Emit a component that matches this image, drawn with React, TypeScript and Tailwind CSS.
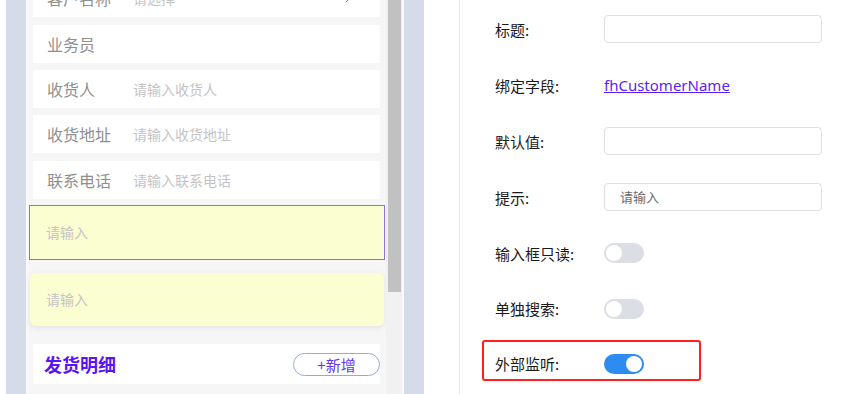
import React from "react";
import { ChevronRight } from "lucide-react";

const cjk = { fontFamily: '"Noto Sans CJK SC", "Noto Sans", sans-serif' };

function Row({ label, placeholder, mt, chevron }: { label: string; placeholder?: string; mt: string; chevron?: boolean }) {
  return (
    <div className={`${mt} h-[38px] w-[347px] bg-white flex items-center pl-[14px] pr-[24px]`}>
      <div className="w-[86px] text-[16px] text-[#8f8f8f] leading-none">{label}</div>
      <div className="flex-1 text-[14px] text-[#c4c4c4] leading-none">{placeholder}</div>
      {chevron && <ChevronRight size={16} strokeWidth={1.5} className="text-[#8a8a8a]" />}
    </div>
  );
}

function FormRow({ label, h, children }: { label: string; h: string; children: React.ReactNode }) {
  return (
    <div className={`${h} flex items-center`}>
      <div className="w-[109px] text-[15px] text-[#1a1a1a] leading-none">{label}</div>
      {children}
    </div>
  );
}

function Input({ placeholder }: { placeholder?: string }) {
  return (
    <div className="w-[218px] h-[28px] border border-[#dcdfe6] rounded-[4px] flex items-center pl-[15px] text-[13px] text-[#6b6b6b]">
      {placeholder}
    </div>
  );
}

function Toggle({ on }: { on?: boolean }) {
  return (
    <div className={`w-[40px] h-[20px] rounded-full flex items-center px-[2px] ${on ? "bg-[#2d8cf0] justify-end" : "bg-[#dcdee6] justify-start"}`}>
      <div className="w-[16px] h-[16px] rounded-full bg-white" />
    </div>
  );
}

export default function App() {
  return (
    <div className="w-[853px] h-[394px] overflow-hidden flex bg-white" style={cjk}>
      <div className="w-[6px] bg-white" />
      <div className="w-[20px] bg-[#d5dbe9]" />
      {/* phone */}
      <div className="w-[360px] bg-[#f6f6f6] border-l-2 border-[#fafafa] pl-[5px] flex flex-col">
        <Row label="客户名称" placeholder="请选择" mt="mt-[-21px]" chevron />
        <Row label="业务员" mt="mt-[8px]" />
        <Row label="收货人" placeholder="请输入收货人" mt="mt-[7px]" />
        <Row label="收货地址" placeholder="请输入收货地址" mt="mt-[7px]" />
        <Row label="联系电话" placeholder="请输入联系电话" mt="mt-[8px]" />
        <div className="mt-[6px] ml-[-4px] w-[356px] h-[55px] bg-[#fbfed1] border border-[#8b6ff2] flex items-center pl-[16px] text-[14px] text-[#c4c4c4]">
          请输入
        </div>
        <div className="mt-[13px] ml-[-3px] w-[354px] h-[53px] bg-[#fbfed1] rounded-[6px] shadow-[0_2px_6px_rgba(0,0,0,0.08)] flex items-center pl-[16px] text-[14px] text-[#c4c4c4]">
          请输入
        </div>
        <div className="mt-[18px] w-[347px] h-[40px] bg-white flex items-center justify-between pl-[11px]">
          <div className="text-[18px] font-bold text-[#5a14f2] leading-none">发货明细</div>
          <div className="w-[87px] h-[23px] rounded-full border border-[#93a7f4] flex items-center justify-center text-[15px] text-[#6236ee] leading-none">
            +新增
          </div>
        </div>
      </div>
      {/* scrollbar */}
      <div className="w-[16px] bg-[#f1f1f1] pl-[2px] pr-[1px]">
        <div className="h-[292px] bg-[#c1c1c1]" />
      </div>
      <div className="w-[2px] bg-[#f8f9fb]" />
      <div className="w-[20px] bg-[#d5dbe9]" />
      {/* right panel */}
      <div className="flex-1 bg-white flex">
        <div className="w-[35px]" />
        <div className="w-px bg-[#efe6ea]" />
        <div className="flex-1 pl-[35px] pt-px flex flex-col">
          <FormRow label="标题:" h="h-[56px]">
            <Input />
          </FormRow>
          <FormRow label="绑定字段:" h="h-[56px]">
            <a className="text-[15px] text-[#5b1ff5] underline leading-none" style={{ fontFamily: '"Noto Sans", sans-serif' }}>
              fhCustomerName
            </a>
          </FormRow>
          <FormRow label="默认值:" h="h-[56px]">
            <Input />
          </FormRow>
          <FormRow label="提示:" h="h-[56px]">
            <Input placeholder="请输入" />
          </FormRow>
          <FormRow label="输入框只读:" h="h-[56px]">
            <Toggle />
          </FormRow>
          <FormRow label="单独搜索:" h="h-[55px]">
            <Toggle />
          </FormRow>
          <div className="relative">
            <FormRow label="外部监听:" h="h-[55px]">
              <Toggle on />
            </FormRow>
            <div className="absolute left-[-13px] top-[4px] w-[219px] h-[41px] border-2 border-[#ff1f1f] rounded-[3px]" />
          </div>
        </div>
      </div>
    </div>
  );
}
